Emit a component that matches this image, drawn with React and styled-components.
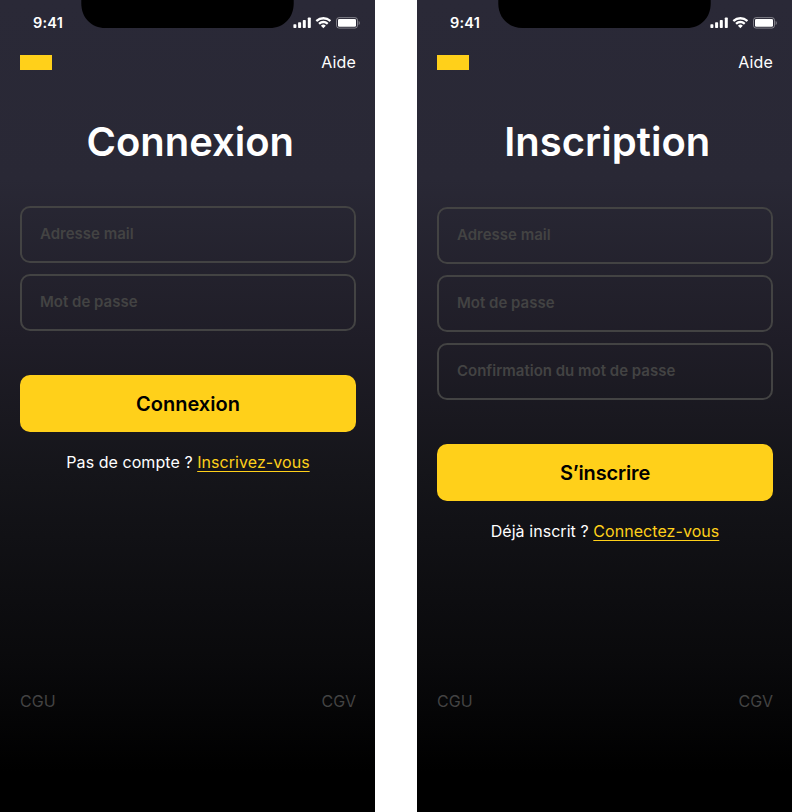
import React from "react";
import styled, { createGlobalStyle } from "styled-components";

const Global = createGlobalStyle`
  * { box-sizing: border-box; }
  body { margin: 0; background: #fff; font-family: Inter, sans-serif; }
`;

const Board = styled.main`
  display: flex;
  justify-content: space-between;
  width: 792px;
  height: 812px;
  overflow: hidden;
`;

const Phone = styled.section`
  display: flex;
  flex-direction: column;
  width: 375px;
  height: 812px;
  color: #fff;
  background: linear-gradient(180deg, #2a2937 0%, #292835 22%, #1f1d27 42%, #15151a 58%, #09090b 82%, #000 95%);
`;

const StatusBar = styled.header`
  display: flex;
  height: 44px;
  padding-left: 33px;
`;

const Time = styled.span`
  width: 48px;
  padding-top: 14px;
  font-size: 14.5px;
  line-height: 18px;
  font-weight: 600;
  letter-spacing: 0.2px;
`;

const Notch = styled.svg`
  display: block;
  width: 213px;
  height: 28px;
`;

const StatusIcons = styled.svg`
  display: block;
  width: 67px;
  height: 13px;
  margin-top: 17px;
  overflow: visible;
`;

const TopBar = styled.nav`
  display: flex;
  align-items: center;
  justify-content: space-between;
  height: 36px;
  padding: 0 19px 0 20px;
  font-size: 16px;
  letter-spacing: 0.14px;
`;

const Logo = styled.span`
  width: 32px;
  height: 15px;
  background: #ffd01a;
`;

const Title = styled.h1`
  margin: 38px 0 0;
  padding-left: 5.5px;
  text-align: center;
  font-size: 40px;
  line-height: 48px;
  font-weight: 600;
`;

const Form = styled.form`
  display: flex;
  flex-direction: column;
  gap: 11px;
  margin: ${(p) => p.$top}px 19px 0 20px;
`;

const Input = styled.input`
  height: 57px;
  padding: 0 18px 2px;
  border: 2px solid #434343;
  border-radius: 10px;
  background: transparent;
  color: #fff;
  font: 600 15px Inter, sans-serif;
  outline: none;
  &::placeholder { color: #434343; opacity: 1; }
`;

const Submit = styled.button`
  height: 57px;
  margin-top: 33px;
  border: 0;
  border-radius: 10px;
  background: #ffd01a;
  color: #000;
  font: 600 20px Inter, sans-serif;
  letter-spacing: ${(p) => p.$tracking || 0}px;
`;

const Prompt = styled.p`
  margin: 20px 0 0;
  padding-left: 1px;
  text-align: center;
  font-size: 16px;
  line-height: 20px;
  letter-spacing: 0.06px;
`;

const Link = styled.a`
  color: #ffd01a;
  text-decoration: underline 1px;
  text-underline-offset: 3px;
`;

const Footer = styled.footer`
  display: flex;
  justify-content: space-between;
  margin-top: auto;
  padding: 0 19px 101px 20px;
  color: #434343;
  font-size: 16px;
  line-height: 20px;
  letter-spacing: 0.08px;
`;

function Screen({ title, top, fields, action, tracking, question, link }) {
  return (
    <Phone>
      <StatusBar>
        <Time>9:41</Time>
        <Notch viewBox="0 0 213 28">
          <path d="M0.3 0h212.4v3.5c0 14-10 24.5-24 24.5H24.3c-14 0-24-10.5-24-24.5z" fill="#000" />
        </Notch>
        <StatusIcons viewBox="0 0 67 13" fill="#fff">
          <rect x="-0.6" y="7.2" width="3" height="3.8" rx="0.7" />
          <rect x="4.1" y="5.2" width="3" height="5.8" rx="0.7" />
          <rect x="8.8" y="3" width="3" height="8" rx="0.7" />
          <rect x="13.8" y="0.6" width="3" height="10.4" rx="0.7" />
          <g transform="translate(21.7 0.1)">
            <path d="M7.67 2.28c2.22 0 4.36.86 5.97 2.38.12.12.32.12.44 0l1.16-1.17a.33.33 0 0 0 0-.47 10.99 10.99 0 0 0-15.14 0 .33.33 0 0 0 0 .47l1.16 1.17c.12.12.31.12.44 0a8.69 8.69 0 0 1 5.97-2.38z" />
            <path d="M7.67 6.08c1.21 0 2.39.46 3.29 1.27.12.12.32.12.44 0l1.16-1.18a.33.33 0 0 0 0-.47 7.1 7.1 0 0 0-9.77 0 .33.33 0 0 0 0 .47l1.16 1.18c.12.12.31.12.44 0 .9-.82 2.06-1.27 3.28-1.27z" />
            <path d="M9.99 8.67a.33.33 0 0 1-.1.24L7.9 10.94a.32.32 0 0 1-.46 0L5.44 8.91a.33.33 0 0 1 .01-.47 3.4 3.4 0 0 1 4.43 0c.07.06.11.14.11.23z" />
          </g>
          <rect x="42.5" y="0.6" width="21" height="10.5" rx="2.6" fill="none" stroke="#fff" strokeOpacity="0.4" />
          <rect x="44" y="2" width="18" height="7.7" rx="1.3" />
          <path d="M64.6 4v4c.8-.3 1.2-1.1 1.2-2s-.4-1.7-1.2-2z" opacity="0.4" />
        </StatusIcons>
      </StatusBar>
      <TopBar>
        <Logo />
        <span>Aide</span>
      </TopBar>
      <Title>{title}</Title>
      <Form $top={top}>
        {fields.map((f) => <Input key={f} placeholder={f} />)}
        <Submit type="button" $tracking={tracking}>{action}</Submit>
      </Form>
      <Prompt>{question} <Link>{link}</Link></Prompt>
      <Footer><span>CGU</span><span>CGV</span></Footer>
    </Phone>
  );
}

export default function App() {
  return (
    <>
      <Global />
      <Board>
        <Screen title="Connexion" top={40} fields={["Adresse mail", "Mot de passe"]} action="Connexion" question="Pas de compte ?" link="Inscrivez-vous" />
        <Screen title="Inscription" top={41} fields={["Adresse mail", "Mot de passe", "Confirmation du mot de passe"]} action="S’inscrire" tracking={-0.15} question="Déjà inscrit ?" link="Connectez-vous" />
      </Board>
    </>
  );
}
